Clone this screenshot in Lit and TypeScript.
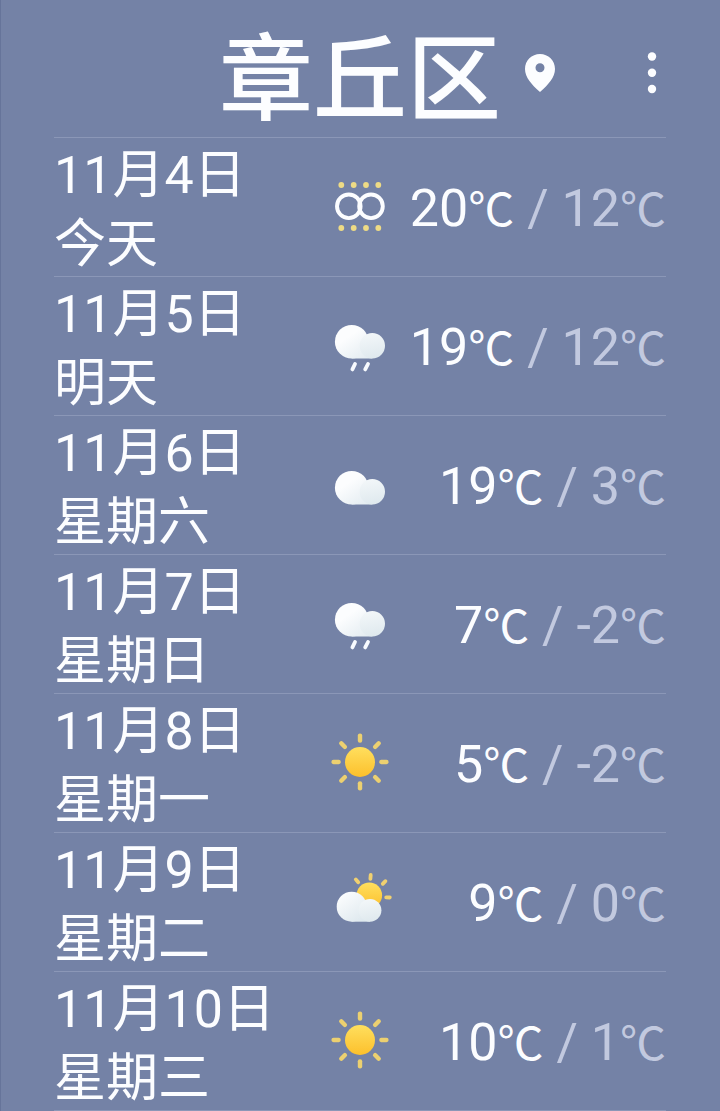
import { LitElement, html, css, svg } from "lit";
import { customElement, property } from "lit/decorators.js";

type Weather = "haze" | "rain" | "cloud" | "sun" | "partly";

interface Day {
  date: string;
  label: string;
  weather: Weather;
  high: number;
  low: number;
}

const DAYS: Day[] = [
  { date: "11月4日", label: "今天", weather: "haze", high: 20, low: 12 },
  { date: "11月5日", label: "明天", weather: "rain", high: 19, low: 12 },
  { date: "11月6日", label: "星期六", weather: "cloud", high: 19, low: 3 },
  { date: "11月7日", label: "星期日", weather: "rain", high: 7, low: -2 },
  { date: "11月8日", label: "星期一", weather: "sun", high: 5, low: -2 },
  { date: "11月9日", label: "星期二", weather: "partly", high: 9, low: 0 },
  { date: "11月10日", label: "星期三", weather: "sun", high: 10, low: 1 },
];

const NAMES: Record<Weather, string> = {
  haze: "霾",
  rain: "雨",
  cloud: "阴",
  sun: "晴",
  partly: "多云",
};

@customElement("weather-icon")
class WeatherIcon extends LitElement {
  @property() kind: Weather = "sun";

  static styles = css`
    :host {
      display: block;
      width: 60px;
      height: 60px;
    }
    svg {
      display: block;
      width: 100%;
      height: 100%;
      overflow: visible;
    }
  `;

  private defs() {
    return svg`<defs>
      <linearGradient id="puff" gradientUnits="userSpaceOnUse" x1="12" y1="14" x2="38" y2="52">
        <stop offset="0.2" stop-color="#fcfdfe" />
        <stop offset="1" stop-color="#dce7ed" />
      </linearGradient>
      <linearGradient id="puff-front" x1="0.3" y1="0" x2="0.5" y2="1">
        <stop offset="0" stop-color="#f3f7f9" />
        <stop offset="1" stop-color="#dfe9ee" />
      </linearGradient>
      <linearGradient id="sun" x1="0" y1="0" x2="0" y2="1">
        <stop offset="0" stop-color="#ffdf5e" />
        <stop offset="1" stop-color="#fcc02c" />
      </linearGradient>
    </defs>`;
  }

  private cloud() {
    return svg`
      <g fill="url(#puff)">
        <circle cx="21.7" cy="25.7" r="16.8" />
        <rect x="21.7" y="28" width="20.6" height="14.5" />
      </g>
      <circle cx="42.3" cy="29.8" r="12.7" fill="url(#puff-front)" />`;
  }

  private art() {
    switch (this.kind) {
      case "haze":
        return svg`
          <g fill="#eedb85">
            ${[8, 51].map((y) =>
              [11.3, 23.7, 36, 48.3].map((x) => svg`<circle cx=${x} cy=${y} r="2.9" />`)
            )}
          </g>
          <g fill="none" stroke="#fcfdff" stroke-width="3.9">
            <circle cx="18.8" cy="29.3" r="11.8" />
            <circle cx="41" cy="29.3" r="11.8" />
          </g>`;
      case "rain":
        return svg`${this.cloud()}
          <path d="M25 48 22.4 53.4M38 48 35.2 53.4" stroke="#f8fbff" stroke-width="3.8" stroke-linecap="round" />`;
      case "cloud":
        return svg`<g transform="translate(0 7)">${this.cloud()}</g>`;
      case "sun":
        return svg`
          <g fill="#ecd070">
            ${[0, 45, 90, 135, 180, 225, 270, 315].map(
              (a) => svg`<rect x="27.8" y="0.4" width="4.4" height="9.4" rx="2.1" transform="rotate(${a} 30 29)" />`
            )}
          </g>
          <circle cx="30" cy="29" r="15" fill="url(#sun)" />`;
      case "partly":
        return svg`<g transform="translate(0 -4)">
          <path d="M40.7 7 40.4 10.8M25.8 11.4 28.2 14.3M55.4 13.2 52.8 15.8M56.2 29.3 59.8 29.5"
            stroke="#f0d070" stroke-width="3.8" stroke-linecap="round" />
          <circle cx="39.3" cy="27.3" r="12.8" fill="url(#sun)" />
          <g fill="url(#puff)">
            <circle cx="21.7" cy="38.7" r="15" />
            <rect x="21.7" y="41" width="18.3" height="12.7" />
          </g>
          <circle cx="40" cy="42.3" r="11.4" fill="url(#puff-front)" />
        </g>`;
    }
  }

  render() {
    return html`<svg viewBox="0 0 60 60" role="img" aria-label=${NAMES[this.kind]}>
      ${this.defs()}${this.art()}
    </svg>`;
  }
}

@customElement("app-root")
class AppRoot extends LitElement {
  static styles = css`
    :host {
      display: block;
      box-sizing: border-box;
      min-height: 100vh;
      padding: 0 54px;
      background: #7482a6;
      box-shadow: inset 1px 0 #66749a;
      color: #fcfdff;
      font-family: Roboto, "Noto Sans CJK SC", sans-serif;
      font-size: 52px;
      line-height: 69px;
    }
    .header {
      display: grid;
      grid-template-columns: 1fr auto 1fr;
      align-items: center;
      padding-top: 8px;
    }
    .title {
      grid-column: 2;
      margin: 0;
      padding-top: 18px;
      font-size: 94px;
      font-weight: 500;
      line-height: 111px;
    }
    .tools {
      display: flex;
      align-items: center;
      justify-content: space-between;
      padding-left: 24px;
    }
    .pin {
      display: block;
      width: 30px;
      height: 38px;
    }
    .menu {
      display: block;
      padding: 0;
      border: 0;
      background: none;
      color: inherit;
      cursor: pointer;
    }
    .dots {
      display: block;
      width: 28px;
      height: 44px;
    }
    .days {
      margin: 0;
      padding: 0;
      list-style: none;
      border-top: 1px solid #8b97b7;
    }
    .day {
      display: grid;
      grid-template-columns: 1fr 60px 1fr;
      align-items: center;
      border-bottom: 1px solid #8b97b7;
    }
    .when {
      display: flex;
      flex-direction: column;
      margin: 3px 0 -3px;
      white-space: nowrap;
    }
    .temps {
      padding-top: 4px;
      text-align: right;
      white-space: nowrap;
    }
    .unit {
      font-size: 46px;
    }
    .low {
      color: #c2c9df;
    }
  `;

  render() {
    return html`
      <header class="header">
        <h1 class="title">章丘区</h1>
        <div class="tools">
          <svg class="pin" viewBox="0 0 30 38" aria-hidden="true">
            <path
              fill="currentColor"
              fill-rule="evenodd"
              d="M15 0C6.7 0 0 6.6 0 15c0 8.200 6.500 15.500 15 23 8.500-7.500 15-14.800 15-23C30 6.600 23.300 0 15 0zm0 9.200a4.500 4.500 0 1 1 0 9 4.500 4.500 0 0 1 0-9z"
            />
          </svg>
          <button class="menu" type="button" aria-label="更多">
            <svg class="dots" viewBox="0 0 28 44" fill="currentColor" aria-hidden="true">
              <circle cx="14" cy="5.5" r="4.2" />
              <circle cx="14" cy="21.7" r="4.2" />
              <circle cx="14" cy="38" r="4.2" />
            </svg>
          </button>
        </div>
      </header>
      <ul class="days">
        ${DAYS.map(
          (d) => html`<li class="day">
            <div class="when"><span>${d.date}</span><span>${d.label}</span></div>
            <weather-icon kind=${d.weather}></weather-icon>
            <div class="temps">${d.high}<span class="unit">℃</span><span class="low"> / ${d.low}<span class="unit">℃</span></span></div>
          </li>`
        )}
      </ul>
    `;
  }
}
